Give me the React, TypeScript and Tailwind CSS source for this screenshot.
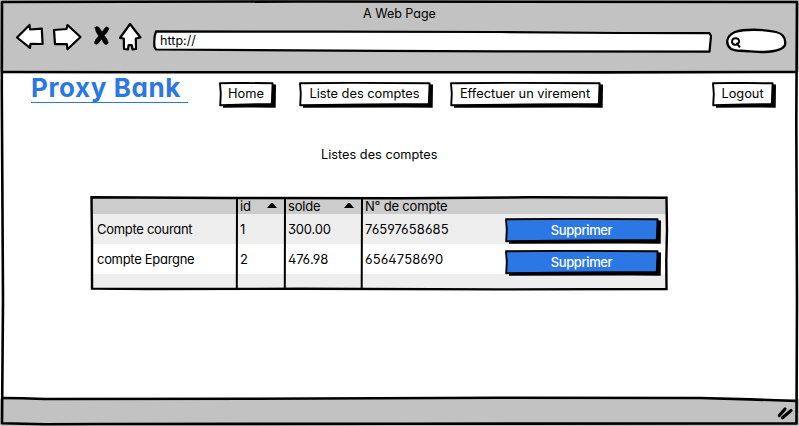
import type { ReactNode } from "react";

const FONT =
  "font-['Inter','Lato',sans-serif] [font-feature-settings:'cv11','ss01','cv03','cv04']";

function SketchButton({ width, blue = false, children }: { width: number; blue?: boolean; children: ReactNode }) {
  const w = width;
  return (
    <button className="relative block h-[26px] shrink-0" style={{ width: w }}>
      <svg className="absolute inset-0" width={w} height={26} viewBox={`0 0 ${w} 26`}>
        <path d={`M4 21 V25.8 L${w - 30} 25.5 L${w - 0.3} 25.7 L${w} 2.6 L${w - 5} 2.2 V21 Z`} fill="#000" />
        <path
          d={`M1 1.2 L${w * 0.4} 0.9 L${w - 3.4} 1.3 L${w - 4.2} 22 L${w * 0.5} 22.4 L1.2 23.2 L1.8 12 Z`}
          fill={blue ? "#2b78e4" : "#fff"}
          stroke="#000"
          strokeWidth="1.9"
          strokeLinejoin="round"
        />
      </svg>
      <span
        className={`absolute top-0 left-0 flex items-center justify-center whitespace-nowrap ${
          blue ? "h-[26px] text-[13px] font-medium tracking-[-0.4px] text-white" : "h-[23px] text-[12.8px] text-black"
        }`}
        style={{ width: w - 3 }}
      >
        {children}
      </span>
    </button>
  );
}

function BrowserFrame() {
  return (
    <svg className="pointer-events-none absolute inset-0" width="799" height="426" fill="none" stroke="#000" strokeWidth="2.6">
      <path d="M2 2 L300 1.5 L797 2 L796.3 120 L797 300 L796.5 423.5 L400 423.7 L100 424 L45 424.3 L2 423.3 L3 300 L1.8 90 Z" strokeLinejoin="round" />
      <path d="M2 72 L140 72.3 L400 72.2 L600 72.4 L797 72" />
      <path d="M2 398 L22 398.2 L45 399 L250 398.8 L500 397.8 L700 398 L750 399.4 L797 401" />
    </svg>
  );
}

function NavIcons() {
  return (
    <svg width="136" height="34" viewBox="10 20 136 34" className="shrink-0" fill="#fff" stroke="#000" strokeWidth="2.2" strokeLinejoin="round" strokeLinecap="round">
      <path d="M17 37.5 L29.5 25 L30 29.5 L41.8 28.7 L42.6 44 L30.5 43.8 L30 47.8 Z" />
      <path d="M54 30 L66.5 29 L67.5 25 L80.5 37 L67.5 49.3 L66.8 44 L55 44.2 Z" />
      <path
        d="M95 27.5 Q96.5 25.5 99 27.5 L102 32 L105 28 Q107 25.5 109 28.5 Q108 32 104.2 35.5 Q107.5 39 108.3 43 Q106.5 45.8 104 43.5 L101.5 39 L98.5 43 Q96.5 45.5 94.3 43.2 Q95 39.5 98.7 36 Q95.3 31.5 95 27.5 Z"
        fill="#000"
        strokeWidth="0.6"
      />
      <path d="M130 24 L140.5 37.5 L135.8 38.5 L136 49 L132.5 49.3 L131.8 45.2 L128.6 45.2 L128 49.3 L124 49 L123.8 38.5 L120 38 Z" />
    </svg>
  );
}

function UrlBar() {
  return (
    <div className="relative mt-2 ml-[6px] h-[26px] w-[560px]">
      <svg className="absolute inset-0" width="560" height="26" viewBox="152 28 560 26">
        <path d="M156 31.3 L330 31.7 L500 32 L620 33 L709.5 33.2 L711 36 L709.5 51.6 L500 51.3 L380 50.8 L156 49.5 L154.5 47 C154 42 154.5 35 156 31.3 Z" fill="#fff" stroke="#000" strokeWidth="2.2" strokeLinejoin="round" />
      </svg>
      <span className="relative block pl-2 text-[12.6px] leading-[25px]">http://</span>
    </div>
  );
}

function SearchBox() {
  return (
    <svg className="mt-[6px] ml-[12px] shrink-0" width="64" height="30" viewBox="724 26 64 30" fill="none" stroke="#000" strokeWidth="2.3" strokeLinecap="round">
      <path d="M731 49 C725 44 726 36 735 32 C744 29 762 29 776 32 C784 34 786 39 785 45 C783 50 774 51.5 764 52 C754 52 746 50.5 739 50.8 Q734 50.5 731 49 Z" fill="#fff" />
      <path d="M732 42 Q732 38 736 38.2 Q739.5 38.6 739 42 Q738 45 735 44.8 Q732.4 44.6 732 42 Z M737 43.5 L739.5 46.8" strokeWidth="2" />
    </svg>
  );
}

function HeaderCell({ label, sortable = false }: { label: string; sortable?: boolean }) {
  return (
    <div className="flex items-center justify-between pr-2 pl-[3px]">
      <span>{label}</span>
      {sortable && (
        <svg className="-mt-[2px]" width="10" height="5" viewBox="0 0 10 5"><path d="M0 5 L4.2 0 L5.8 0 L10 5 Z" /></svg>
      )}
    </div>
  );
}

const COLS = "grid grid-cols-[146px_48px_77px_140px_165px]";

function Row({ name, id, solde, num, bg }: { name: string; id: string; solde: string; num: string; bg: string }) {
  return (
    <div className={`${COLS} h-[30px] items-center pt-[2px] ${bg}`}>
      <span className="pl-[6px] tracking-[-0.3px]">{name}</span>
      <span className="pl-[3px]">{id}</span>
      <span className="pl-[3px] tracking-[-0.2px]">{solde}</span>
      <span className="pl-[3px] tracking-[0.1px]">{num}</span>
      <span />
    </div>
  );
}

function AccountsTable() {
  return (
    <div className="relative ml-[91px] h-[92px] w-[576px] pt-[1px] text-[13px]">
      <div className={`${COLS} h-[16px] bg-[#cccccc] leading-[16px] tracking-[-0.2px]`}>
        <HeaderCell label="" />
        <HeaderCell label="id" sortable />
        <HeaderCell label="solde" sortable />
        <HeaderCell label="N° de compte" />
        <div />
      </div>
      <Row name="Compte courant" id="1" solde="300.00" num="76597658685" bg="bg-[#eeeeee]" />
      <Row name="compte Epargne" id="2" solde="476.98" num="6564758690" bg="bg-white" />
      <div className="h-[14px] bg-[#eeeeee]" />
      <svg className="absolute -top-[3px] -left-[3px]" width="582" height="98" viewBox="88 194 582 98" fill="none" stroke="#000" strokeWidth="2.4">
        <path d="M91.5 197.3 L230 198 L400 198.2 L530 197.3 L666.5 197.7 L667 230 L666.3 260 L666.5 289 L500 289.4 L300 288.8 L150 289 L92 288.6 L92 240 Z" />
        <path d="M237 198 L236.8 289 M285 198 L284.8 289 M362 198 L361.7 289" strokeWidth="2" />
      </svg>
      <div className="absolute top-[21px] left-[414px] flex flex-col gap-[6px]">
        <SketchButton width={156} blue>Supprimer</SketchButton>
        <SketchButton width={156} blue>Supprimer</SketchButton>
      </div>
    </div>
  );
}

export default function App() {
  return (
    <div className={`relative flex h-[426px] w-[799px] flex-col overflow-hidden bg-white text-black ${FONT}`}>
      <header className="h-[72px] shrink-0 bg-[#c2c2c2]">
        <div className="h-[20px] pt-[2px] text-center text-[12.5px] leading-[23px]">A Web Page</div>
        <div className="flex items-start pl-[10px]">
          <NavIcons />
          <UrlBar />
          <SearchBox />
        </div>
      </header>
      <main className="flex-1">
        <nav className="flex h-[38px] items-start">
          <h1 className="mt-[1px] ml-[31px] h-[30px] w-[157px] border-b border-[#2b78e4] text-[26px] leading-[30px] font-bold tracking-[0.6px] whitespace-nowrap text-[#2b78e4]">Proxy Bank</h1>
          <div className="mt-[10px] ml-[31px] flex">
            <SketchButton width={57}>Home</SketchButton>
            <div className="w-[23px]" />
            <SketchButton width={134}>Liste des comptes</SketchButton>
            <div className="w-[17px]" />
            <SketchButton width={153}>Effectuer un virement</SketchButton>
            <div className="w-[109px]" />
            <SketchButton width={64}>Logout</SketchButton>
          </div>
        </nav>
        <h2 className="mt-[35px] ml-[321px] h-[20px] text-[12.75px] leading-[20px]">Listes des comptes</h2>
        <div className="mt-[32px]">
          <AccountsTable />
        </div>
      </main>
      <footer className="flex h-[27px] shrink-0 justify-end bg-[#c2c2c2] pt-[6px] pr-[5px]">
        <svg width="18" height="16" viewBox="776 405 18 16" stroke="#000" strokeLinecap="round" strokeWidth="3.2">
          <path d="M779.3 415.5 L785 409 M782.5 417.7 L791 410.5" />
        </svg>
      </footer>
      <BrowserFrame />
    </div>
  );
}
